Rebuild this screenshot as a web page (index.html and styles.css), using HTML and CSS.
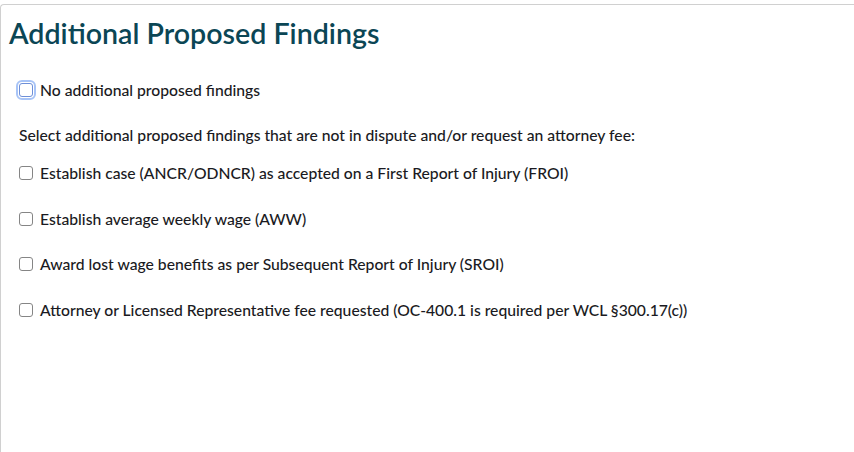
FILE: index.html
```html
<!DOCTYPE html>
<html lang="en">
<head>
    <meta charset="UTF-8">
    <meta name="viewport" content="width=device-width, initial-scale=1.0">
    <title>Additional Proposed Findings</title>
    <link rel="stylesheet" href="styles.css">
</head>
<body>
    <div class="panel">
        <h1 class="panel-title">Additional Proposed Findings</h1>

        <label class="check-row no-findings">
            <input type="checkbox" class="focused">
            <span>No additional proposed findings</span>
        </label>

        <p class="intro">Select additional proposed findings that are not in dispute and/or request an attorney fee:</p>

        <div class="findings">
            <label class="check-row">
                <input type="checkbox">
                <span>Establish case (ANCR/ODNCR) as accepted on a First Report of Injury (FROI)</span>
            </label>
            <label class="check-row">
                <input type="checkbox">
                <span>Establish average weekly wage (AWW)</span>
            </label>
            <label class="check-row">
                <input type="checkbox">
                <span>Award lost wage benefits as per Subsequent Report of Injury (SROI)</span>
            </label>
            <label class="check-row">
                <input type="checkbox">
                <span>Attorney or Licensed Representative fee requested (OC-400.1 is required per WCL §300.17(c))</span>
            </label>
        </div>
    </div>
</body>
</html>
```

FILE: styles.css
```css
html, body {
    margin: 0;
    padding: 0;
    background: #fff;
}
body {
    font-family: Lato, "Open Sans", Arial, sans-serif;
    font-size: 15.7px;
    font-weight: 500;
    color: #1a1a22;
}
.panel {
    margin-top: 4px;
    height: 460px;
    border: 1px solid #d0d0d0;
    border-right: none;
    border-bottom: none;
    border-top-left-radius: 4px;
    padding: 0 0 0 8px;
}
.panel-title {
    margin: 0;
    padding-top: 12px;
    font-size: 28.6px;
    font-weight: 600;
    color: #0b4655;
    line-height: 32px;
}
.check-row {
    display: flex;
    align-items: center;
    gap: 7px;
    cursor: pointer;
}
.check-row input {
    margin: 0;
    width: 14px;
    height: 14px;
    appearance: none;
    border: 1px solid #858585;
    border-radius: 3px;
    background: #fff;
}
.check-row input.focused {
    outline: 2px solid #a8c4f7;
    outline-offset: 1px;
    border-color: #6e8fd8;
}
.no-findings {
    margin-top: 32px;
    padding-left: 10px;
    height: 18px;
}
.intro {
    margin: 27px 0 0 10px;
    line-height: 18px;
}
.findings {
    display: flex;
    flex-direction: column;
    gap: 27.7px;
    margin-top: 20px;
    padding-left: 10px;
}
.findings .check-row {
    height: 18px;
}
```
